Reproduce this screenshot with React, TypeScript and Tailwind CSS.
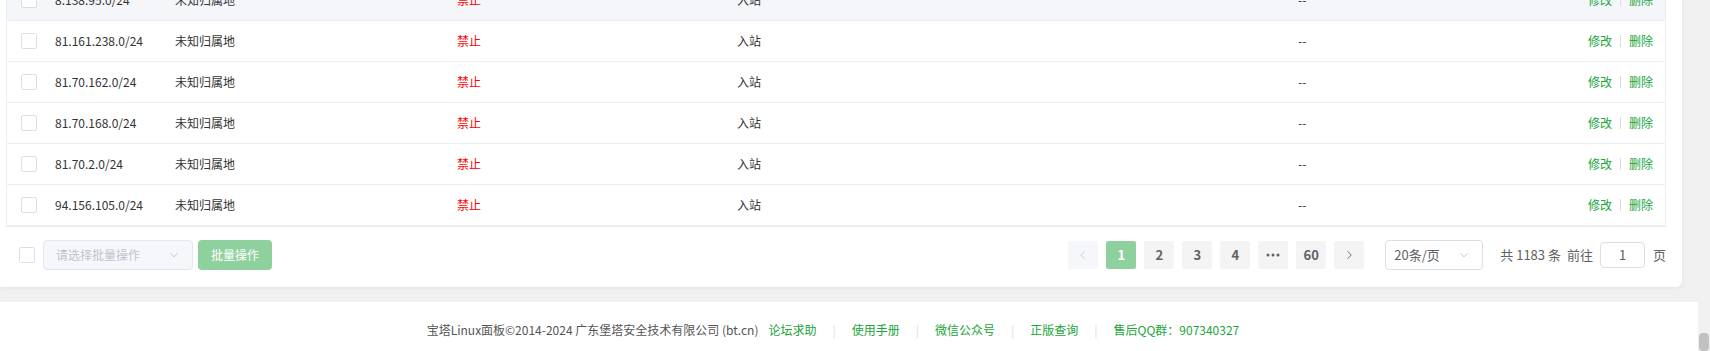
import React from "react";

const rows = [
    { ip: "8.138.95.0/24", hover: true },
    { ip: "81.161.238.0/24" },
    { ip: "81.70.162.0/24" },
    { ip: "81.70.168.0/24" },
    { ip: "81.70.2.0/24" },
    { ip: "94.156.105.0/24" },
];

const pages = ["1", "2", "3", "4", "more", "60"];

function Chevron({ dir, className }: { dir: "down" | "left" | "right"; className?: string }) {
    const d =
        dir === "down" ? "M3 5.5l5 5 5-5" : dir === "left" ? "M10 3L5 8l5 5" : "M6 3l5 5-5 5";
    return (
        <svg viewBox="0 0 16 16" className={className} fill="none" stroke="currentColor" strokeWidth="1.2">
            <path d={d} />
        </svg>
    );
}

function Dots() {
    return (
        <svg viewBox="0 0 14 4" className="w-[14px] h-[4px]" fill="currentColor">
            <circle cx="2" cy="2" r="1.5" />
            <circle cx="7" cy="2" r="1.5" />
            <circle cx="12" cy="2" r="1.5" />
        </svg>
    );
}

function Checkbox() {
    return <span className="block w-4 h-4 rounded-[2px] border border-[#dcdfe6] bg-white" />;
}

function Row({ ip, hover }: { ip: string; hover?: boolean }) {
    return (
        <div
            className={`grid grid-cols-[48px_120px_282px_280px_561px_1fr_auto] items-center h-[41px] border-b border-[#ebeef5] text-[12px] text-[#333] ${hover ? "bg-[#f5f6fa]" : "bg-white"}`}
        >
            <div className="pl-[14px]">
                <Checkbox />
            </div>
            <div>{ip}</div>
            <div>未知归属地</div>
            <div className="text-[#ff0000]">禁止</div>
            <div>入站</div>
            <div>--</div>
            <div className="flex items-center pr-3 text-[#20a53a]">
                <span>修改</span>
                <span className="mx-2 h-3 w-px bg-[#dcdcdc]" />
                <span>删除</span>
            </div>
        </div>
    );
}

export default function App() {
    return (
        <div
            className="flex h-[351px] w-full overflow-hidden bg-white"
            style={{ fontFamily: '"Noto Sans CJK SC", "Noto Sans", sans-serif' }}
        >
            <div className="flex-1 min-w-0 flex flex-col">
                <div className="bg-[#f0f0f0] pr-4 pb-[15px]">
                    <div className="bg-white rounded-br-md shadow-[0_1px_4px_rgba(0,0,0,0.06)] pl-[6px] pr-4">
                        <div className="-mt-[20px] border-x border-b border-[#ebeef5]">
                            {rows.map((r, i) => (
                                <Row key={i} ip={r.ip} hover={r.hover} />
                            ))}
                        </div>

                        <div className="flex items-center justify-between pt-[13px] pb-[17px] text-[12px]">
                            <div className="flex items-center">
                                <div className="ml-[13px] mr-2">
                                    <Checkbox />
                                </div>
                                <div className="flex items-center justify-between w-[150px] h-[30px] px-3 rounded border border-[#e4e7ed] bg-[#f5f7fa] text-[#c0c4cc]">
                                    <span>请选择批量操作</span>
                                    <Chevron dir="down" className="w-3 h-3 text-[#c0c4cc]" />
                                </div>
                                <button className="ml-[5px] w-[74px] h-[30px] rounded bg-[#8fd19e] text-white text-[12px]">
                                    批量操作
                                </button>
                            </div>

                            <div className="flex items-center text-[#606266]">
                                <div className="flex items-center gap-2">
                                    <span className="flex items-center justify-center w-[30px] h-[28px] rounded-[2px] bg-[#f6f7fa] text-[#c0c4cc]">
                                        <Chevron dir="left" className="w-3 h-3" />
                                    </span>
                                    {pages.map((p, i) => (
                                        <span
                                            key={p}
                                            className={`flex items-center justify-center w-[30px] h-[28px] rounded-[2px] text-[13px] font-bold ${i === 0 ? "bg-[#8fd19e] text-white" : "bg-[#f4f4f5] text-[#606266]"}`}
                                        >
                                            {p === "more" ? <Dots /> : p}
                                        </span>
                                    ))}
                                    <span className="flex items-center justify-center w-[30px] h-[28px] rounded-[2px] bg-[#f4f4f5] text-[#606266]">
                                        <Chevron dir="right" className="w-3 h-3" />
                                    </span>
                                </div>
                                <div className="ml-[21px] flex items-center justify-between w-[98px] h-[30px] pl-2 pr-3 rounded border border-[#dcdfe6] text-[13px]">
                                    <span>20条/页</span>
                                    <Chevron dir="down" className="w-3 h-3 text-[#c0c4cc]" />
                                </div>
                                <span className="ml-[17px] text-[13px]">共 1183 条</span>
                                <span className="ml-[6px] text-[13px]">前往</span>
                                <span className="ml-[7px] flex items-center justify-center w-[45px] h-[26px] rounded border border-[#dcdfe6] text-[13px]">
                                    1
                                </span>
                                <span className="ml-[8px] text-[13px]">页</span>
                            </div>
                        </div>
                    </div>
                </div>

                <div className="flex justify-center pt-[19px] pr-8 text-[12px] leading-[18px] text-[#555]">
                    <span>宝塔Linux面板©2014-2024 广东堡塔安全技术有限公司 (bt.cn)</span>
                    <span className="ml-[10px] text-[#20a53a]">论坛求助</span>
                    <span className="mx-4 text-[#ddd]">|</span>
                    <span className="text-[#20a53a]">使用手册</span>
                    <span className="mx-4 text-[#ddd]">|</span>
                    <span className="text-[#20a53a]">微信公众号</span>
                    <span className="mx-4 text-[#ddd]">|</span>
                    <span className="text-[#20a53a]">正版查询</span>
                    <span className="mx-4 text-[#ddd]">|</span>
                    <span className="text-[#20a53a]">售后QQ群：907340327</span>
                </div>
            </div>

            <div className="w-3 bg-[#f1f1f1] flex flex-col justify-end">
                <div className="h-[18px] mx-[1px] rounded-sm bg-[#c1c1c1]" />
            </div>
        </div>
    );
}
